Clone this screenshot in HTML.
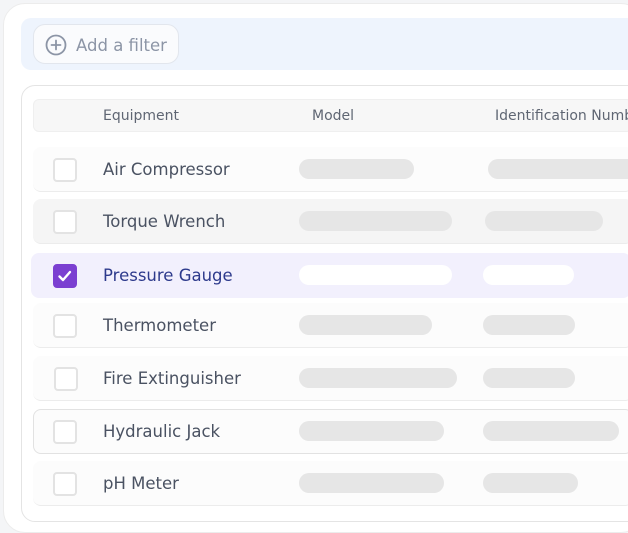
<!DOCTYPE html>
<html><head><style>
*{box-sizing:border-box;margin:0;padding:0}
body{width:628px;height:524px;background:#f4f5f7;position:relative;overflow:hidden;font-family:"DejaVu Sans","Liberation Sans",sans-serif}
.card{position:absolute;left:3px;top:3px;width:640px;height:530px;background:#fff;border:1px solid #ececec;border-radius:22px}
.fbar{position:absolute;left:21px;top:18px;width:620px;height:52px;background:#eef4fd;border-radius:10px}
.btn{position:absolute;left:33px;top:24px;width:146px;height:40px;background:#fafbfd;border:1px solid #e2e6ed;border-radius:12px;color:#8c95a6;font-size:16.5px}
.btn span{position:absolute;left:42px;top:11px}
.btn svg{position:absolute;left:11px;top:9px}
.tbl{position:absolute;left:21px;top:85px;width:630px;height:437px;border:1px solid #e4e4e4;border-radius:14px;background:#fff}
.hdr{position:absolute;left:33px;top:99px;width:600px;height:33px;background:#f7f7f7;border:1px solid #efefef;border-radius:6px;color:#5f6673;font-size:14px}
.hdr span{position:absolute;top:8px}
.row{position:absolute;left:33px;width:600px;height:45px;background:#fcfcfc;border-bottom:1px solid #ececec;border-radius:8px}
.row .cb{position:absolute;left:20px;top:11px;width:24px;height:24px;border:2px solid #e3e3e3;border-radius:4px;background:#fff}
.row .t{position:absolute;left:70px;top:13px;font-size:16.5px;color:#4a5262}
.pill{position:absolute;height:20px;border-radius:10px;background:#e6e6e6;top:12px}
</style></head><body>
<div class="card"></div>
<div class="fbar"></div>
<div class="btn"><svg width="22" height="22" viewBox="0 0 22 22"><circle cx="11" cy="11" r="9.5" fill="none" stroke="#8c95a6" stroke-width="1.8"/><path d="M11 6.5v9M6.5 11h9" stroke="#8c95a6" stroke-width="1.8" stroke-linecap="round"/></svg><span>Add a filter</span></div>
<div class="tbl"></div>
<div class="hdr"><span style="left:69px">Equipment</span><span style="left:278px">Model</span><span style="left:461px;white-space:nowrap">Identification Number</span></div>

<div class="row" style="top:147px"><div class="cb"></div><div class="t">Air Compressor</div><div class="pill" style="left:266px;width:115px"></div><div class="pill" style="left:455px;width:160px"></div></div>
<div class="row" style="top:199px;background:#f5f5f5"><div class="cb"></div><div class="t">Torque Wrench</div><div class="pill" style="left:266px;width:153px"></div><div class="pill" style="left:452px;width:118px"></div></div>
<div class="row" style="top:253px;left:31px;background:#f2f0fd;border:none"><div class="cb" style="left:22px;top:11px;background:#7b3fd1;border-color:#7b3fd1"><svg width="20" height="20" viewBox="0 0 20 20" style="position:absolute;left:0;top:0"><path d="M4.5 10.5l3.5 3.5 7-8" fill="none" stroke="#fff" stroke-width="2.4" stroke-linecap="round" stroke-linejoin="round"/></svg></div><div class="t" style="left:72px;color:#2d3a8c">Pressure Gauge</div><div class="pill" style="left:268px;width:153px;background:#fff"></div><div class="pill" style="left:452px;width:91px;background:#fff"></div></div>
<div class="row" style="top:303px"><div class="cb"></div><div class="t">Thermometer</div><div class="pill" style="left:266px;width:133px"></div><div class="pill" style="left:450px;width:92px"></div></div>
<div class="row" style="top:356px"><div class="cb" style="left:21px"></div><div class="t">Fire Extinguisher</div><div class="pill" style="left:266px;width:158px"></div><div class="pill" style="left:450px;width:92px"></div></div>
<div class="row" style="top:409px;border:1px solid #e2e2e2"><div class="cb" style="left:19px;top:10px"></div><div class="t" style="left:69px;top:12px">Hydraulic Jack</div><div class="pill" style="left:265px;width:145px;top:11px"></div><div class="pill" style="left:449px;width:136px;top:11px"></div></div>
<div class="row" style="top:461px"><div class="cb"></div><div class="t">pH Meter</div><div class="pill" style="left:266px;width:145px"></div><div class="pill" style="left:450px;width:95px"></div></div>
</body></html>
